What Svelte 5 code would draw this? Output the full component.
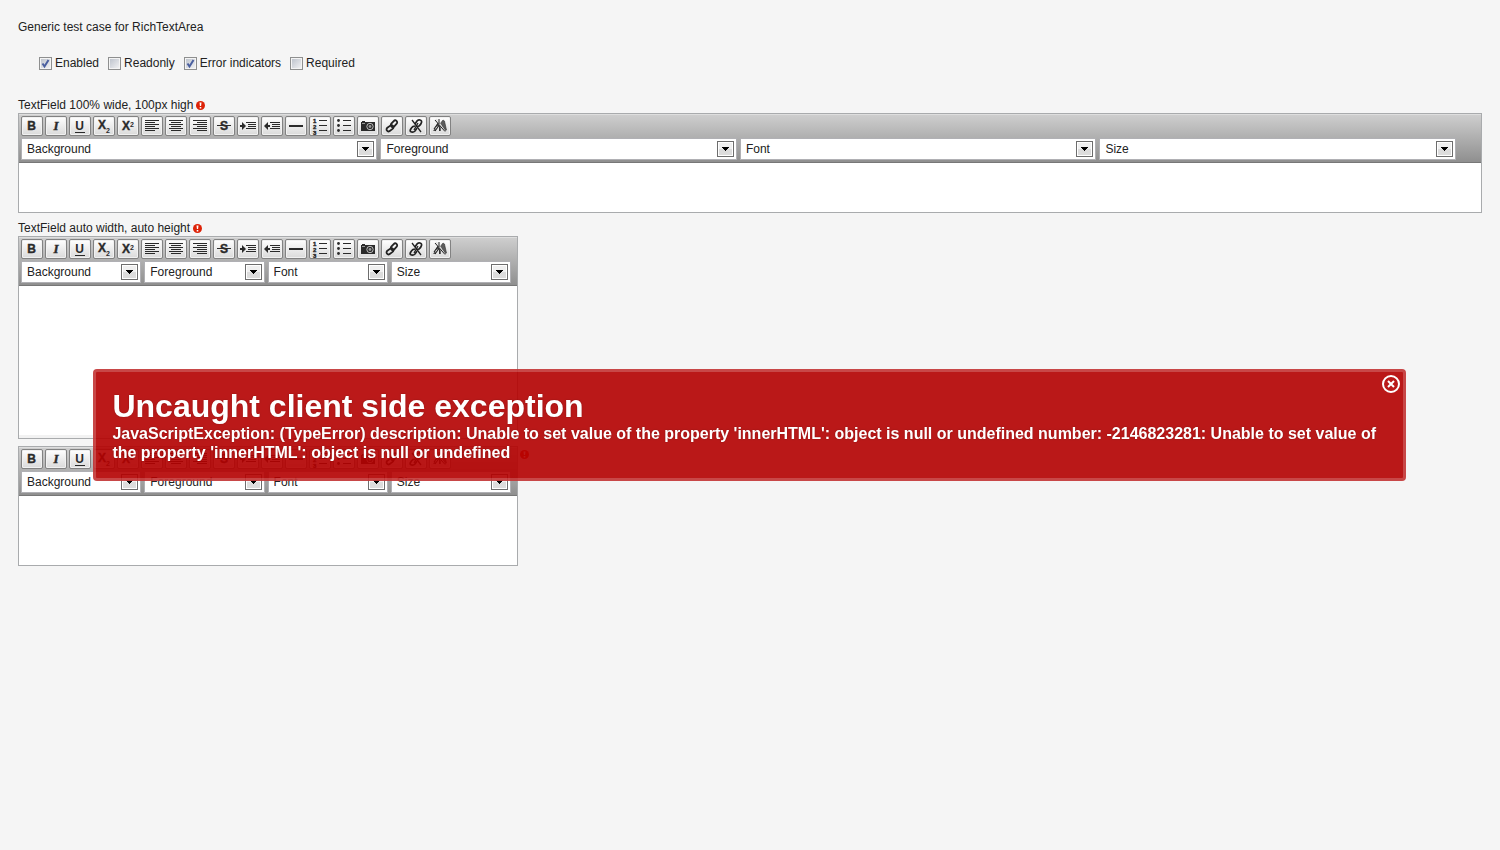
<script>
  const tools = [
    'Bold', 'Italic', 'Underline', 'Subscript', 'Superscript', 'Align left', 'Center',
    'Align right', 'Strikethrough', 'Indent', 'Outdent', 'Horizontal rule', 'Ordered list',
    'Unordered list', 'Insert image', 'Create link', 'Remove link', 'Remove formatting'
  ];
  const lists = ['Background', 'Foreground', 'Font', 'Size'];
  const rows = [3, 5, 7, 9, 11, 13];
  let options = $state([
    { label: 'Enabled', on: true },
    { label: 'Readonly', on: false },
    { label: 'Error indicators', on: true },
    { label: 'Required', on: false }
  ]);
  let showError = $state(true);
</script>

{#snippet errorMark()}
  <svg class="mark" viewBox="0 0 9 9" aria-hidden="true">
    <circle cx="4.5" cy="4.5" r="4.5" fill="#dd2207" />
    <path d="M3.5 1.5h2l-.4 3.6h-1.2zM3.7 6h1.6v1.5H3.7z" fill="#fff" />
  </svg>
{/snippet}

{#snippet glyph(name)}
  <svg viewBox="0 0 20 18" width="20" height="18" fill="#2a2a2a" stroke="none" aria-hidden="true">
    {#if name === 'Bold'}
      <text x="9.5" y="13" class="sans heavy" font-size="12" text-anchor="middle">B</text>
    {:else if name === 'Italic'}
      <text x="10" y="13" class="serif heavy" font-size="13" text-anchor="middle">I</text>
    {:else if name === 'Underline'}
      <text x="9.5" y="13" class="sans" font-size="12" text-anchor="middle">U</text>
      <rect x="5" y="15" width="10" height="1" />
    {:else if name === 'Subscript'}
      <text x="4" y="12" class="sans heavy" font-size="12">X</text>
      <text x="12" y="16" class="sans" font-size="7">2</text>
    {:else if name === 'Superscript'}
      <text x="4" y="13" class="sans heavy" font-size="12">X</text>
      <text x="12" y="10" class="sans" font-size="7">2</text>
    {:else if name === 'Align left'}
      {#each rows as y, i}<rect x="3" {y} width={i % 2 ? 10 : 14} height="1" />{/each}
    {:else if name === 'Center'}
      {#each rows as y, i}<rect x={i % 2 ? 5 : 3} {y} width={i % 2 ? 10 : 14} height="1" />{/each}
    {:else if name === 'Align right'}
      {#each rows as y, i}<rect x={i % 2 ? 7 : 3} {y} width={i % 2 ? 10 : 14} height="1" />{/each}
    {:else if name === 'Strikethrough'}
      <text x="10" y="13" class="sans heavy" font-size="12" text-anchor="middle">S</text>
      <rect x="3" y="8" width="14" height="1" />
    {:else if name === 'Indent' || name === 'Outdent'}
      {#if name === 'Indent'}
        <path d="M2 8h2V5l4 4-4 4v-3H2z" />
      {:else}
        <path d="M8 8H6V5L2 9l4 4v-3h2z" />
      {/if}
      <rect x="8" y="5" width="10" height="1" />
      <rect x="10" y="7" width="8" height="1" />
      <rect x="10" y="9" width="8" height="1" />
      <rect x="8" y="11" width="10" height="1" />
    {:else if name === 'Horizontal rule'}
      <rect x="3" y="8" width="14" height="2" />
    {:else if name === 'Ordered list'}
      <text x="3" y="6" class="sans heavy" font-size="6">1</text>
      <text x="3" y="12" class="sans heavy" font-size="6">2</text>
      <text x="3" y="18" class="sans heavy" font-size="6">3</text>
      {#each [3, 8, 13] as y}<rect x="9" {y} width="8" height="1" />{/each}
    {:else if name === 'Unordered list'}
      {#each [3, 8, 13] as y}
        <circle cx="4.5" cy={y + 0.5} r="1.4" />
        <rect x="9" {y} width="8" height="1" />
      {/each}
    {:else if name === 'Insert image'}
      <path d="M3 5h1V4h3v1h10v9H3z" />
      <circle cx="12" cy="9.5" r="3.2" fill="none" stroke="#bbb" />
      <circle cx="12" cy="9.5" r="1.4" fill="#999" />
      <rect x="4" y="6" width="3" height="1" fill="#999" />
    {:else if name === 'Create link'}
      <g fill="none" stroke="#222" stroke-width="1.8">
        <rect x="-3.8" y="-2" width="7.6" height="4" rx="2" transform="translate(12 6.7) rotate(-48)" />
        <rect x="-3.8" y="-2" width="7.6" height="4" rx="2" transform="translate(8 11.300) rotate(-36)" />
      </g>
    {:else if name === 'Remove link'}
      <g fill="none" stroke="#222" stroke-width="1.7">
        <path d="M9 7l2-3q1-1.500 3-1t1.500 2.500T13 9l-2 .5" />
        <path d="M11 11l-2 3q-1.500 1.500-3.500 1T4.500 12.500 7 9.500l2-.5" />
      </g>
      <path d="M6 3l9 12" stroke="#222" stroke-width="1.3" />
      <path d="M12 6l-4 7" stroke="#222" stroke-width="1.3" />
    {:else}
      <path d="M3.500 14l4.500-8 2 3v5M11 5.500l2-2.500 1.500 1 2 9-1.500 1-1.500-3-1 1z" stroke="#222" stroke-width=".5" fill-opacity=".75" />
      <path d="M5 10l4-1v5H6z" fill="#e6e6e6" />
      <path d="M4 12l5-7M5 14l5-7M10 6v8" stroke="#222" stroke-width="1.1" />
      <path d="M6 2l9 13" stroke="#e6e6e6" stroke-width="2" />
      <path d="M5 3l10 11.500M9 2v5" stroke="#222" stroke-width="1" />
    {/if}
  </svg>
{/snippet}

{#snippet editor(name, kind)}
  <div class="editor {kind}">
    <div class="toolbar">
      <div class="buttons">
        {#each tools as tool}
          <button type="button" class="tool" aria-label={tool}>{@render glyph(tool)}</button>
        {/each}
      </div>
      <div class="lists">
        {#each lists as item}
          <div class="list">
            <select aria-label={item}><option>{item}</option></select>
            <span class="drop"><svg viewBox="0 0 7 4" width="7" height="4"><path d="M0 0h7v1H6v1H5v1H4v1H3V3H2V2H1V1H0z" shape-rendering="crispEdges" /></svg></span>
          </div>
        {/each}
      </div>
    </div>
    <textarea id={kind} aria-label={name}></textarea>
  </div>
{/snippet}

<main>
  <p class="intro">Generic test case for RichTextArea</p>
  <div class="options">
    {#each options as option}
      <label class="option">
        <span class="box">
          <input type="checkbox" bind:checked={option.on} />
          {#if option.on}
            <svg viewBox="0 0 13 13" aria-hidden="true"><path d="M3.500 6.500l2 3 4-6.500" fill="none" stroke="#4a5f9f" stroke-width="2" /></svg>
          {/if}
        </span>
        {option.label}
      </label>
    {/each}
  </div>

  <section>
    <label class="caption" for="wide">TextField 100% wide, 100px high {@render errorMark()}</label>
    {@render editor('TextField 100% wide, 100px high', 'wide')}
  </section>
  <section>
    <label class="caption" for="auto">TextField auto width, auto height {@render errorMark()}</label>
    {@render editor('TextField auto width, auto height', 'auto')}
  </section>
  <section class="bare">
    {@render editor('Text', 'short')}
    {@render errorMark()}
  </section>
</main>

{#if showError}
  <div class="layer">
    <div class="notice" role="alert">
      <h1>Uncaught client side exception</h1>
      <p>JavaScriptException: (TypeError) description: Unable to set value of the property 'innerHTML': object is null or undefined number: -2146823281: Unable to set value of the property 'innerHTML': object is null or undefined</p>
      <button type="button" class="close" aria-label="Close" onclick={() => (showError = false)}>
        <svg viewBox="0 0 20 20" width="20" height="20" fill="none" stroke="#fff">
          <circle cx="10" cy="10" r="8" stroke-width="2" />
          <path d="M7 7l6 6M13 7l-6 6" stroke-width="2" />
        </svg>
      </button>
    </div>
  </div>
{/if}

<style>
  :global(body) {
    margin: 0;
    background: #f5f5f5;
  }
  main {
    padding: 18px;
    font: 12px/16px Arial, "Liberation Sans", sans-serif;
    color: #222;
  }
  .intro {
    margin: 0;
    padding-top: 1px;
  }
  .options {
    display: flex;
    gap: 9px;
    padding: 20px 21px 26px;
  }
  .option {
    display: flex;
    align-items: center;
    gap: 3px;
  }
  .box {
    display: grid;
  }
  .box > * {
    grid-area: 1 / 1;
    width: 13px;
    height: 13px;
    pointer-events: none;
  }
  .box input {
    appearance: none;
    box-sizing: border-box;
    margin: 0;
    border: 1px solid #8e8f8f;
    background: linear-gradient(135deg, #b9bfc9, #f5f5f6) padding-box;
    box-shadow: inset 0 0 0 1px #f4f4f4;
    pointer-events: auto;
  }
  section {
    margin-bottom: 7px;
  }
  .caption {
    display: flex;
    align-items: center;
    gap: 3px;
    height: 16px;
  }
  .mark {
    width: 9px;
    height: 9px;
    flex: none;
  }
  .bare {
    display: flex;
    gap: 2px;
  }
  .bare > .mark {
    margin-top: 4px;
  }
  .editor {
    box-sizing: border-box;
    display: flex;
    flex-direction: column;
    border: 1px solid #a9abad;
    background: #fff;
  }
  .wide {
    height: 100px;
  }
  .auto {
    width: 500px;
    height: 203px;
  }
  .short {
    width: 500px;
    height: 120px;
  }
  .toolbar {
    box-sizing: border-box;
    padding: 2px;
    height: 49px;
    border-bottom: 1px solid #777;
    background: linear-gradient(#cfcfcf, #8f8f8f);
    box-shadow: inset 0 1px #dedede;
  }
  .buttons {
    display: flex;
    gap: 2px;
    margin-bottom: 2px;
  }
  .tool {
    display: grid;
    padding: 0;
    border: 1px solid #828282;
    border-radius: 2px;
    background: linear-gradient(#fff, #dadada);
    box-shadow: inset 0 0 0 1px #f1f1f1;
  }
  .sans {
    font-family: Arial, "Liberation Sans", sans-serif;
    font-weight: bold;
  }
  .serif {
    font-family: "Times New Roman", "Liberation Serif", serif;
    font-weight: bold;
    font-style: italic;
  }
  .heavy {
    stroke: #2a2a2a;
    stroke-width: 0.4px;
  }
  .lists {
    display: grid;
    grid-template-columns: repeat(4, 1fr);
    gap: 3px;
    padding-right: calc(2% - 6px);
  }
  .list {
    display: grid;
    align-items: center;
    height: 22px;
    box-sizing: border-box;
    border: 1px solid #b0b0b4;
    background: #fff;
  }
  .list > * {
    grid-area: 1 / 1;
  }
  select {
    appearance: none;
    min-width: 0;
    width: 100%;
    height: 20px;
    padding: 0 24px 0 5px;
    border: 0;
    background: none;
    color: #222;
    font: inherit;
  }
  .drop {
    display: grid;
    place-items: center;
    justify-self: end;
    box-sizing: border-box;
    width: 17px;
    height: 16px;
    margin-right: 2px;
    border: 1px solid #6d6d6d;
    background: linear-gradient(#f0f0f0 50%, #dcdcdc 50%);
    box-shadow: inset 0 0 0 1px #fff;
    pointer-events: none;
  }
  textarea {
    flex: 1;
    min-height: 0;
    padding: 4px;
    border: 0;
    background: none;
    resize: none;
    font: inherit;
  }
  .auto textarea {
    border-bottom: 3px solid #f2f2f2;
  }
  .layer {
    position: fixed;
    inset: 0;
    display: grid;
    place-content: center;
    justify-items: center;
    padding-right: 1px;
    pointer-events: none;
  }
  .notice {
    position: relative;
    max-width: 85%;
    padding: 16px;
    border: 3px solid rgba(255, 255, 255, 0.2);
    border-radius: 4px;
    background: rgba(180, 0, 0, 0.9);
    color: #fff;
    font: bold 16px/19px Arial, "Liberation Sans", sans-serif;
    text-shadow: 0 0 2px rgba(90, 0, 0, 0.5);
    pointer-events: auto;
  }
  .notice h1 {
    margin: 0;
    font-size: 32px;
    line-height: 36px;
  }
  .notice p {
    margin: 0;
  }
  .close {
    position: absolute;
    top: 2px;
    right: 2px;
    padding: 0;
    border: 0;
    background: none;
    line-height: 0;
    cursor: pointer;
  }
</style>
